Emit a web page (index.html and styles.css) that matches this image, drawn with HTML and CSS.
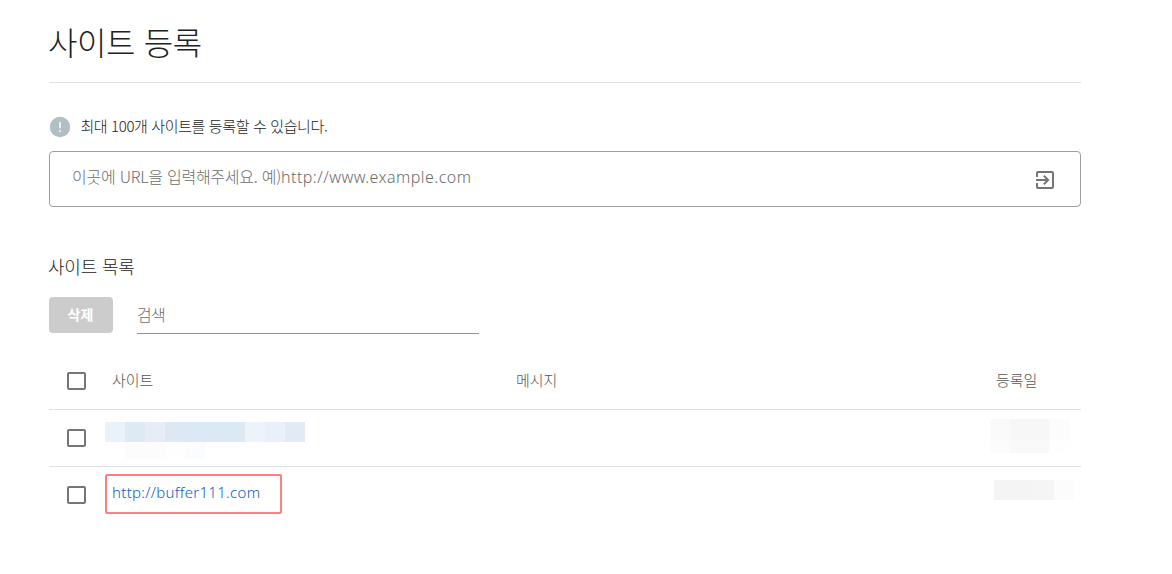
FILE: index.html
```html
<!DOCTYPE html>
<html lang="ko">
<head>
    <meta charset="UTF-8">
    <meta name="viewport" content="width=device-width, initial-scale=1.0">
    <title>사이트 등록</title>
    <link rel="stylesheet" href="styles.css">
</head>
<body>
    <div class="page">
        <h1><span>사이트 등록</span></h1>

        <div class="notice">
            <svg class="notice-icon" viewBox="0 0 22 22" width="22" height="22">
                <circle cx="11" cy="11" r="10.2" fill="#b0bec5"/>
                <path d="M11 6v6.2M11 14.2v1.8" stroke="#fff" stroke-width="1.5"/>
            </svg>
            <span class="notice-text">최대 100개 사이트를 등록할 수 있습니다.</span>
        </div>

        <div class="url-box">
            <div class="url-hint"><span class="hint-ko">이곳에 URL을 입력해주세요. 예)</span><span class="hint-url">http://www.example.com</span></div>
            <svg class="submit-icon" viewBox="0 0 24 24" width="24" height="24">
                <path fill="#757575" d="M10.09 15.59 11.5 17l5-5-5-5-1.41 1.41L12.67 11H3v2h9.67l-2.58 2.59zM19 3H5c-1.11 0-2 .9-2 2v4h2V5h14v14H5v-4H3v4c0 1.1.89 2 2 2h14c1.1 0 2-.9 2-2V5c0-1.1-.9-2-2-2z"/>
            </svg>
        </div>

        <h2><span>사이트 목록</span></h2>
        <div class="toolbar">
            <button type="button" disabled><span>삭제</span></button>
            <div class="search"><span>검색</span></div>
        </div>

        <div class="list">
            <div class="row head">
                <div class="check"><i class="box"></i></div>
                <div class="site"><span class="label">사이트</span></div>
                <div class="message"><span class="label">메시지</span></div>
                <div class="date"><span class="label">등록일</span></div>
            </div>
            <div class="row masked">
                <div class="check"><i class="box"></i></div>
                <div class="site">
                    <div class="mosaic blue">
                        <i class="b1"></i><i class="b2"></i><i class="b3"></i><i class="b4"></i><i class="b5"></i><i class="b6"></i><i class="b7"></i>
                    </div>
                    <div class="mosaic faint"><i class="f1"></i><i class="f2"></i><i class="f3"></i></div>
                </div>
                <div class="message"></div>
                <div class="date">
                    <div class="mosaic grey"><i class="g1"></i><i class="g2"></i><i class="g3"></i></div>
                    <div class="mosaic grey low"><i class="g3"></i><i class="g4"></i><i class="g5"></i></div>
                </div>
            </div>
            <div class="row last">
                <div class="check"><i class="box"></i></div>
                <div class="site">
                    <div class="marked"><a href="http://buffer111.com">http://buffer111.com</a></div>
                </div>
                <div class="message"></div>
                <div class="date">
                    <div class="mosaic single"><i class="g6"></i><i class="g7"></i><i class="g3"></i></div>
                </div>
            </div>
        </div>
    </div>
</body>
</html>
```

FILE: styles.css
```css
* {
    box-sizing: border-box;
}

body {
    margin: 0;
    background: #fff;
    color: #212121;
    font-family: "Noto Sans CJK KR", sans-serif;
    font-weight: 300;
}

.page {
    width: 1032px;
    margin-left: 49px;
}

h1, h2 {
    margin: 0;
    font-weight: 300;
    white-space: nowrap;
}

h1 {
    height: 83px;
    padding-top: 17px;
    border-bottom: 1px solid #e0e0e0;
    font-size: 32px;
    line-height: 48px;
    letter-spacing: -0.4px;
}

h1 span, h2 span {
    margin-left: -1px;
}

.notice {
    display: flex;
    align-items: center;
    height: 24px;
    margin-top: 32px;
}

.notice-icon {
    margin: 0 9px 0 0.4px;
}

.notice-text {
    font-size: 15px;
    line-height: 24px;
    letter-spacing: -0.37px;
    margin-top: -3px;
}

/* URL input */
.url-box {
    display: flex;
    align-items: center;
    justify-content: space-between;
    height: 56px;
    margin-top: 12px;
    padding: 0 23.5px 0 22px;
    border: 1px solid #9e9e9e;
    border-radius: 4px;
}

.url-hint {
    color: #6c6c6c;
    font-size: 16px;
    line-height: 24px;
    margin-top: -5px;
    white-space: nowrap;
}

.hint-ko {
    letter-spacing: -0.25px;
}

.hint-url {
    font-family: "Noto Sans", "Noto Sans CJK KR", sans-serif;
    letter-spacing: 0.45px;
}

.submit-icon {
    margin-top: 2px;
}

/* site list */
h2 {
    margin-top: 47px;
    font-size: 18px;
    line-height: 24px;
    letter-spacing: -0.2px;
}

.toolbar {
    display: flex;
    margin-top: 19px;
}

button {
    width: 64px;
    height: 36px;
    padding: 0 1px 2px 0;
    border: none;
    border-radius: 4px;
    background: #cccccc;
    color: #fff;
    font-family: inherit;
    font-size: 14px;
    font-weight: 700;
}

.search {
    width: 342px;
    height: 37px;
    margin-left: 24px;
    padding-top: 5px;
    border-bottom: 1px solid #949494;
    color: #6c6c6c;
    font-size: 16px;
    line-height: 24px;
    letter-spacing: -0.6px;
}

.list {
    margin-top: 19px;
}

.row {
    display: flex;
    height: 57px;
    border-bottom: 1px solid #e0e0e0;
}

.row.last {
    height: 56px;
    border-bottom: none;
}

.check {
    display: flex;
    align-items: center;
    width: 56px;
    padding-left: 18px;
}

.box {
    width: 19px;
    height: 18px;
    border: 2px solid #757575;
    border-radius: 2px;
}

.site {
    width: 404px;
}

.message {
    width: 480px;
}

.label {
    display: block;
    padding: 15px 0 0 7px;
    color: #555;
    font-size: 15px;
    line-height: 24px;
    letter-spacing: -0.1px;
}

.marked {
    width: 177px;
    height: 40px;
    margin-top: 7px;
    padding: 6px 0 0 5px;
    border: 2px solid #ff7e7e;
    border-radius: 2px;
}

.marked a {
    display: block;
    color: #0d5cc0;
    font-family: "Noto Sans", sans-serif;
    font-size: 15px;
    line-height: 20px;
    letter-spacing: 0.3px;
    text-decoration: none;
    white-space: nowrap;
}

/* hidden values */
.mosaic {
    display: flex;
}

.mosaic i {
    width: 20px;
    height: 20px;
}

.blue { margin-top: 12px; }
.b1 { background: #e9f1f9; }
.b2 { background: #dee9f6; }
.b3 { background: #e6edf7; }
.mosaic .b4 { width: 80px; background: #dde8f5; }
.b5 { background: #edf3fb; }
.b6 { background: #e9f0fa; }
.b7 { background: #e2eaf8; }

.faint { margin-left: 20px; }
.mosaic.faint i { height: 17px; }
.mosaic .f1 { width: 40px; background: #fcfcfd; }
.f2 { background: #fefefe; }
.f3 { background: #fafcfe; }

.grey { margin: 9px 0 0 1px; }
.mosaic.low { margin-top: 0; }
.mosaic.low i { height: 14px; }
.g1 { background: #fafafa; }
.g2 { background: #f7f7f7; }
.mosaic .g2, .mosaic .g4 { width: 40px; }
.g3 { background: #fcfcfc; }
.g4 { background: #f9f9f9; }
.g5 { background: #fefefe; }

.single { margin: 13px 0 0 5px; }
.mosaic .g6 { width: 40px; background: #f4f4f4; }
.g7 { background: #f5f5f5; }
```
